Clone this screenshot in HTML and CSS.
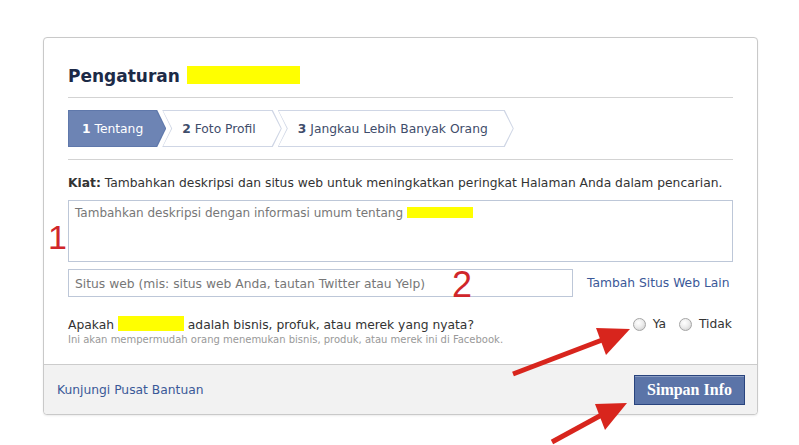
FILE: index.html
```html
<!DOCTYPE html>
<html lang="id">

<head>
    <meta charset="UTF-8">
    <meta name="viewport" content="width=device-width, initial-scale=1.0">
    <title>Pengaturan</title>
    <link rel="stylesheet" href="styles.css">
</head>

<body>
    <div class="card">
        <div class="card-body">
            <div class="title-container">
                <h2>Pengaturan <span class="mark mark-title"></span></h2>
            </div>

            <div class="steps">
                <div class="step step-first active"><div class="step-in"><b>1</b>&nbsp;Tentang</div></div>
                <div class="step"><div class="step-in"><b>2</b>&nbsp;Foto Profil</div></div>
                <div class="step"><div class="step-in"><b>3</b>&nbsp;Jangkau Lebih Banyak Orang</div></div>
            </div>

            <p class="tip"><b>Kiat:</b> Tambahkan deskripsi dan situs web untuk meningkatkan peringkat Halaman Anda dalam pencarian.</p>

            <div class="desc-row">
                <span class="num num-1">1</span>
                <div class="textarea">Tambahkan deskripsi dengan informasi umum tentang <span class="mark mark-desc"></span></div>
            </div>

            <div class="web-row">
                <div class="input">Situs web (mis: situs web Anda, tautan Twitter atau Yelp)
                    <span class="num num-2">2</span>
                </div>
                <a href="#" class="link">Tambah Situs Web Lain</a>
            </div>

            <div class="question-row">
                <div class="question">
                    <div class="q-main">Apakah <span class="mark mark-q"></span> adalah bisnis, profuk, atau merek yang nyata?</div>
                    <div class="q-sub">Ini akan mempermudah orang menemukan bisnis, produk, atau merek ini di Facebook.</div>
                </div>
                <div class="radios">
                    <span class="radio"></span><span class="radio-label">Ya</span>
                    <span class="radio"></span><span class="radio-label">Tidak</span>
                </div>
            </div>
        </div>

        <div class="card-footer">
            <a href="#" class="link">Kunjungi Pusat Bantuan</a>
            <button class="save-button">Simpan Info</button>
        </div>
    </div>

    <!-- panah merah (anotasi) -->
    <svg class="arrows" width="799" height="445" viewBox="0 0 799 445">
        <line x1="513" y1="374" x2="610" y2="337" stroke="#d8251d" stroke-width="5" />
        <polygon points="630,329 596,328 606,355" fill="#d8251d" />
        <line x1="552" y1="442" x2="607" y2="412" stroke="#d8251d" stroke-width="5" />
        <polygon points="627,403 595,404 605,430" fill="#d8251d" />
    </svg>
</body>

</html>
```

FILE: styles.css
```css
body {
    font-family: "DejaVu Sans", sans-serif;
    font-size: 12.3px;
    color: #333;
    margin: 0;
    padding: 0;
    background-color: #fff;
    position: relative;
    width: 799px;
    height: 445px;
    overflow: hidden;
}

.card {
    width: 713px;
    margin: 37px 0 0 43px;
    border: 1px solid #c9c9c9;
    border-radius: 4px;
    background-color: #fff;
    box-shadow: 0 1px 2px rgba(0, 0, 0, 0.08);
}

.card-body {
    padding: 26px 24px 0 24px;
}

.title-container {
    border-bottom: 1px solid #d3d3d3;
    padding-bottom: 8px;
}

h2 {
    margin: 0;
    font-size: 17px;
    line-height: 25px;
    color: #1c2a47;
    font-weight: bold;
}

.mark {
    display: inline-block;
    background-color: #ffff00;
}

.mark-title {
    width: 113px;
    height: 18px;
    vertical-align: -2px;
    margin-left: 1px;
}

.steps {
    display: flex;
    margin-top: 12px;
    height: 37px;
    border-bottom: 1px solid #d3d3d3;
    padding-bottom: 12px;
}

.step {
    height: 37px;
    background-color: #cfd6e5;
    margin-left: -4px;
    clip-path: polygon(0 0, calc(100% - 9px) 0, 100% 50%, calc(100% - 9px) 100%, 0 100%, 9px 50%);
}

.step-in {
    height: 35px;
    margin: 1px;
    padding: 0 25px 0 19px;
    background-color: #fff;
    line-height: 36px;
    color: #3f4d6b;
    clip-path: polygon(0 0, calc(100% - 9px) 0, 100% 50%, calc(100% - 9px) 100%, 0 100%, 9px 50%);
}

.step-first {
    margin-left: 0;
    clip-path: polygon(0 0, calc(100% - 9px) 0, 100% 50%, calc(100% - 9px) 100%, 0 100%);
}

.step-first .step-in {
    padding: 0 22px 0 13px;
    clip-path: polygon(0 0, calc(100% - 9px) 0, 100% 50%, calc(100% - 9px) 100%, 0 100%);
}

.step.active {
    background-color: #5f78ab;
}

.step.active .step-in {
    background-color: #6d84b4;
    color: #fff;
}

.tip {
    margin: 15px 0 9px 0;
    line-height: 16px;
}

.desc-row {
    position: relative;
}

.textarea {
    height: 54px;
    border: 1px solid #bdc7d8;
    padding: 3px 6px;
    font-size: 12px;
    color: #777;
    line-height: 18px;
}

.mark-desc {
    width: 66px;
    height: 11px;
    vertical-align: -1px;
}

.num {
    position: absolute;
    font-family: "Liberation Sans", Arial, sans-serif;
    font-size: 34px;
    line-height: 34px;
    color: #d0262a;
}

.num-1 {
    left: -20px;
    top: 20px;
}

.web-row {
    display: flex;
    align-items: center;
    margin-top: 7px;
}

.input {
    position: relative;
    width: 491px;
    height: 26px;
    border: 1px solid #bdc7d8;
    padding: 0 6px;
    line-height: 28px;
    color: #777;
}

.num-2 {
    left: 383px;
    top: -2px;
    font-size: 36px;
}

.link {
    color: #3b5998;
    text-decoration: none;
}

.web-row .link {
    margin-left: 14px;
}

.question-row {
    display: flex;
    justify-content: space-between;
    align-items: flex-start;
    padding: 19px 0 17px 0;
}

.q-main {
    line-height: 16px;
}

.mark-q {
    width: 66px;
    height: 15px;
    vertical-align: -2px;
}

.q-sub {
    font-size: 10px;
    line-height: 14px;
    color: #999;
}

.radios {
    display: flex;
    align-items: center;
    height: 16px;
    padding-right: 1px;
}

.radio {
    display: inline-block;
    width: 11px;
    height: 11px;
    border: 1px solid #a5a5a5;
    border-radius: 50%;
    background: radial-gradient(circle at 40% 35%, #fff 0%, #ededed 45%, #c8c8c8 100%);
    margin-right: 7px;
}

.radio-label {
    margin-right: 13px;
}

.radio-label:last-child {
    margin-right: 0;
}

.card-footer {
    display: flex;
    justify-content: space-between;
    align-items: center;
    height: 49px;
    padding: 0 12px 0 13px;
    background-color: #f2f2f2;
    border-top: 1px solid #cccccc;
    border-radius: 0 0 4px 4px;
}

.save-button {
    width: 111px;
    height: 30px;
    margin-top: 1px;
    background-color: #5b74a8;
    border: 1px solid #29447e;
    box-shadow: inset 0 1px 0 #8a9cc2;
    color: #fff;
    font-family: "Liberation Serif", "Times New Roman", serif;
    font-weight: bold;
    font-size: 16px;
    padding: 0;
    cursor: pointer;
}

.arrows {
    position: absolute;
    top: 0;
    left: 0;
    pointer-events: none;
}
```
